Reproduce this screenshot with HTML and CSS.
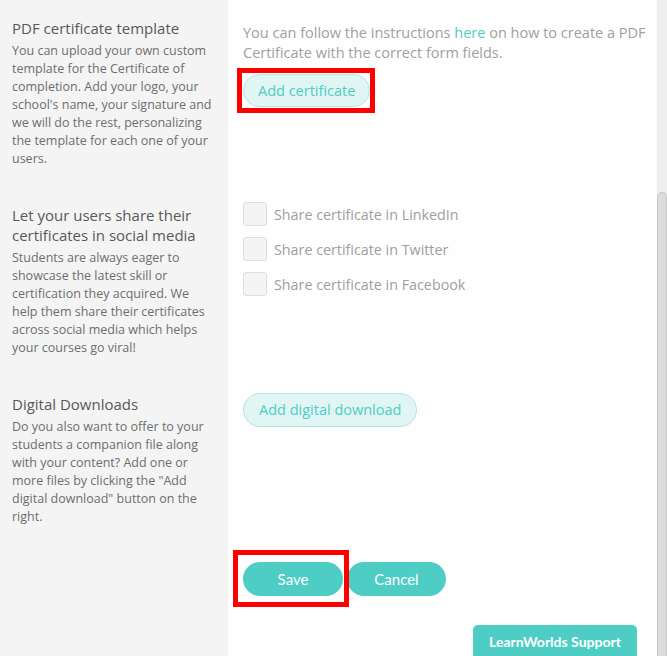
FILE: index.html
```html
<!DOCTYPE html>
<html>
<head>
<meta charset="utf-8">
<link rel="stylesheet" href="styles.css">
</head>
<body>
<div class="page">
  <div class="content">
    <div class="side row1">
      <h3 class="heading">PDF certificate template</h3>
      <p class="desc">You can upload your own custom template for the Certificate of completion. Add your logo, your school's name, your signature and we will do the rest, personalizing the template for each one of your users.</p>
    </div>
    <div class="main row1m">
      <p class="info">You can follow the instructions <a class="link" href="#">here</a> on how to create a PDF Certificate with the correct form fields.</p>
      <button class="pill">Add certificate</button>
    </div>

    <div class="side row2">
      <h3 class="heading">Let your users share their certificates in social media</h3>
      <p class="desc">Students are always eager to showcase the latest skill or certification they acquired. We help them share their certificates across social media which helps your courses go viral!</p>
    </div>
    <div class="main row2m">
      <label class="check"><span class="box"></span><span>Share certificate in LinkedIn</span></label>
      <label class="check"><span class="box"></span><span>Share certificate in Twitter</span></label>
      <label class="check"><span class="box"></span><span>Share certificate in Facebook</span></label>
    </div>

    <div class="side row3">
      <h3 class="heading">Digital Downloads</h3>
      <p class="desc">Do you also want to offer to your students a companion file along with your content? Add one or more files by clicking the "Add digital download" button on the right.</p>
    </div>
    <div class="main row3m">
      <button class="pill">Add digital download</button>
    </div>

    <div class="side row4"></div>
    <div class="main row4m">
      <button class="solid save">Save</button>
      <button class="solid cancel">Cancel</button>
    </div>

    <div class="mark mark-cert"></div>
    <div class="mark mark-save"></div>
    <div class="support">LearnWorlds Support</div>
  </div>
  <div class="scrollbar"><div class="thumb"></div></div>
</div>
</body>
</html>
```

FILE: styles.css
```css
* { box-sizing: border-box; }
html, body { margin: 0; padding: 0; }
body {
  font-family: "Open Sans", "Noto Sans", sans-serif;
  background: #fefefe;
  width: 667px;
  height: 656px;
  overflow: hidden;
}
.page {
  display: flex;
  height: 656px;
}
.content {
  position: relative;
  flex: 1;
  display: grid;
  grid-template-columns: 228px 1fr;
  grid-template-rows: 187px 189px 169px 1fr;
  background: #fefefe;
}
.side {
  background: #f4f4f4;
  padding: 18px 12px 0 12px;
}
.heading {
  margin: 0;
  font-weight: 400;
  font-size: 15px;
  line-height: 20px;
  color: #595959;
}
.desc {
  margin: 4px 0 0 0;
  font-size: 12.5px;
  line-height: 18px;
  color: #6e6e6e;
}
.main {
  padding-left: 15px;
}
.row1m { padding-top: 23px; }
.info {
  margin: 0;
  font-size: 14.5px;
  line-height: 20px;
  color: #a0a0a0;
}
.link { color: #4ecdc4; text-decoration: none; }
.pill {
  display: inline-block;
  height: 33px;
  padding: 0 14px;
  margin-top: 11px;
  border: 1px solid #ade8e2;
  border-radius: 17px;
  background: #e1f6f4;
  color: #4ecdc4;
  font-family: "Open Sans", "Noto Sans", sans-serif;
  font-size: 14.5px;
  line-height: 31px;
}
.row2m {
  padding-top: 15px;
  display: flex;
  flex-direction: column;
  gap: 11px;
}
.check {
  display: flex;
  align-items: center;
  gap: 7px;
  font-size: 14.3px;
  color: #a0a0a0;
  height: 24px;
}
.box {
  width: 24px;
  height: 24px;
  border: 1px solid #dedede;
  border-radius: 3px;
  background: #f4f4f4;
}
.row3m { padding-top: 17px; }
.row3m .pill { margin-top: 0; height: 34px; line-height: 32px; padding: 0 15px; }
.row4m {
  padding-top: 17px;
  display: flex;
  align-items: flex-start;
  gap: 4px;
}
.solid {
  height: 34px;
  border: none;
  border-radius: 17px;
  background: #4ecdc4;
  color: #fff;
  font-family: Lato, "Open Sans", sans-serif;
  font-size: 15px;
}
.save { width: 100px; }
.cancel { width: 99px; }
.mark {
  position: absolute;
  border: 5px solid #ff0000;
}
.mark-cert { left: 237px; top: 68px; width: 138px; height: 45px; }
.mark-save { left: 233px; top: 550px; width: 116px; height: 57px; }
.support {
  position: absolute;
  left: 473px;
  top: 625px;
  width: 164px;
  height: 31px;
  background: #4ecdc4;
  border-radius: 5px 5px 0 0;
  color: #fff;
  font-family: Lato, "Open Sans", sans-serif;
  font-weight: 700;
  font-size: 14px;
  line-height: 33px;
  text-align: center;
}
.scrollbar {
  width: 10px;
  background: #efefef;
  padding-top: 192px;
}
.thumb {
  height: 464px;
  background: #dcdcdc;
  border: 1px solid #c8c8c8;
  border-bottom: none;
  border-radius: 5px 5px 0 0;
}
```
